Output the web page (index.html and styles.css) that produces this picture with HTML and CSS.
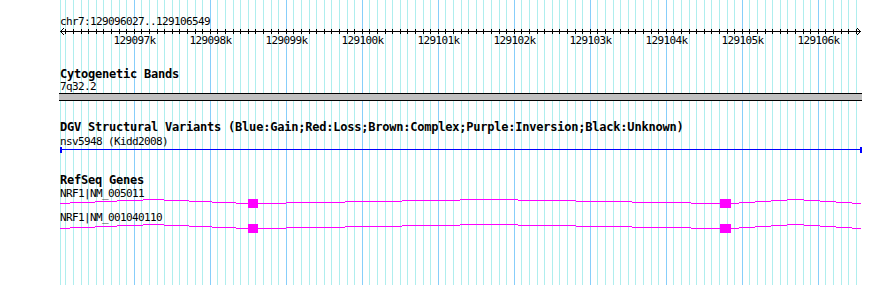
FILE: index.html
```html
<!DOCTYPE html>
<html>
<head>
<meta charset="utf-8">
<link rel="stylesheet" href="styles.css">
</head>
<body>
<div class="panel">
  <svg class="grid" width="890" height="285" viewBox="0 0 890 285" shape-rendering="crispEdges">
    <path class="grid-minor" d="M60.5 0V285M65.5 0V285M73.5 0V285M81.5 0V285M88.5 0V285M96.5 0V285M103.5 0V285M111.5 0V285M119.5 0V285M126.5 0V285
M141.5 0V285M149.5 0V285M157.5 0V285M164.5 0V285M172.5 0V285M179.5 0V285M187.5 0V285M195.5 0V285M202.5 0V285
M217.5 0V285M225.5 0V285M233.5 0V285M240.5 0V285M248.5 0V285M255.5 0V285M263.5 0V285M271.5 0V285M278.5 0V285
M293.5 0V285M301.5 0V285M309.5 0V285M316.5 0V285M324.5 0V285M331.5 0V285M339.5 0V285M347.5 0V285M354.5 0V285
M369.5 0V285M377.5 0V285M385.5 0V285M392.5 0V285M400.5 0V285M407.5 0V285M415.5 0V285M423.5 0V285M430.5 0V285
M445.5 0V285M453.5 0V285M461.5 0V285M468.5 0V285M476.5 0V285M483.5 0V285M491.5 0V285M499.5 0V285M506.5 0V285
M521.5 0V285M529.5 0V285M537.5 0V285M544.5 0V285M552.5 0V285M559.5 0V285M567.5 0V285M575.5 0V285M582.5 0V285
M597.5 0V285M605.5 0V285M613.5 0V285M620.5 0V285M628.5 0V285M635.5 0V285M643.5 0V285M651.5 0V285M658.5 0V285
M673.5 0V285M681.5 0V285M689.5 0V285M696.5 0V285M704.5 0V285M711.5 0V285M719.5 0V285M727.5 0V285M734.5 0V285
M749.5 0V285M757.5 0V285M765.5 0V285M772.5 0V285M780.5 0V285M787.5 0V285M795.5 0V285M803.5 0V285M810.5 0V285
M825.5 0V285M833.5 0V285M841.5 0V285M848.5 0V285M856.5 0V285"/>
    <path class="grid-major" d="M134.5 0V285M210.5 0V285M286.5 0V285M362.5 0V285M438.5 0V285M514.5 0V285M590.5 0V285M666.5 0V285M742.5 0V285M818.5 0V285"/>
  </svg>

  <div class="content">
    <div class="small seglabel">chr7:129096027..129106549</div>
    <svg class="ruler" width="830" height="20" viewBox="60 28 830 20">
      <g shape-rendering="crispEdges">
        <path class="ruler-line" d="M60 31.5H861"/>
        <path class="ruler-line" d="M65.5 29V34M73.5 29V34M81.5 29V34M88.5 29V34M96.5 29V34M103.5 29V34M111.5 29V34M119.5 29V34M126.5 29V34M134.5 29V34
M141.5 29V34M149.5 29V34M157.5 29V34M164.5 29V34M172.5 29V34M179.5 29V34M187.5 29V34M195.5 29V34M202.5 29V34M210.5 29V34
M217.5 29V34M225.5 29V34M233.5 29V34M240.5 29V34M248.5 29V34M255.5 29V34M263.5 29V34M271.5 29V34M278.5 29V34M286.5 29V34
M293.5 29V34M301.5 29V34M309.5 29V34M316.5 29V34M324.5 29V34M331.5 29V34M339.5 29V34M347.5 29V34M354.5 29V34M362.5 29V34
M369.5 29V34M377.5 29V34M385.5 29V34M392.5 29V34M400.5 29V34M407.5 29V34M415.5 29V34M423.5 29V34M430.5 29V34M438.5 29V34
M445.5 29V34M453.5 29V34M461.5 29V34M468.5 29V34M476.5 29V34M483.5 29V34M491.5 29V34M499.5 29V34M506.5 29V34M514.5 29V34
M521.5 29V34M529.5 29V34M537.5 29V34M544.5 29V34M552.5 29V34M559.5 29V34M567.5 29V34M575.5 29V34M582.5 29V34M590.5 29V34
M597.5 29V34M605.5 29V34M613.5 29V34M620.5 29V34M628.5 29V34M635.5 29V34M643.5 29V34M651.5 29V34M658.5 29V34M666.5 29V34
M673.5 29V34M681.5 29V34M689.5 29V34M696.5 29V34M704.5 29V34M711.5 29V34M719.5 29V34M727.5 29V34M734.5 29V34M742.5 29V34
M749.5 29V34M757.5 29V34M765.5 29V34M772.5 29V34M780.5 29V34M787.5 29V34M795.5 29V34M803.5 29V34M810.5 29V34M818.5 29V34
M825.5 29V34M833.5 29V34M841.5 29V34M848.5 29V34M856.5 29V34"/>
      </g>
      <path class="ruler-arrow" d="M64 28L60.5 31.5L64 35M857 28L860.5 31.5L857 35"/>
      <g class="ruler-labels">
        <text x="134.5" y="44">129097k</text>
        <text x="210.5" y="44">129098k</text>
        <text x="286.5" y="44">129099k</text>
        <text x="362.5" y="44">129100k</text>
        <text x="438.5" y="44">129101k</text>
        <text x="514.5" y="44">129102k</text>
        <text x="590.5" y="44">129103k</text>
        <text x="666.5" y="44">129104k</text>
        <text x="742.5" y="44">129105k</text>
        <text x="818.5" y="44">129106k</text>
      </g>
    </svg>

    <section class="track track-cyto">
      <div class="title">Cytogenetic Bands</div>
      <div class="small sub-cyto">7q32.2</div>
      <div class="band"></div>
    </section>

    <section class="track track-dgv">
      <div class="title">DGV Structural Variants (Blue:Gain;Red:Loss;Brown:Complex;Purple:Inversion;Black:Unknown)</div>
      <div class="small sub-dgv">nsv5948 (Kidd2008)</div>
      <svg class="glyph" width="802" height="6" viewBox="60 147 802 6" shape-rendering="crispEdges">
        <path class="dgv-line" d="M60 149.5H862"/>
        <rect class="dgv-cap" x="60" y="147" width="2" height="6"/>
        <rect class="dgv-cap" x="860" y="147" width="2" height="6"/>
      </svg>
    </section>

    <section class="track track-genes">
      <div class="title">RefSeq Genes</div>
      <div class="small sub-gene1">NRF1|NM_005011</div>
      <svg class="glyph" width="802" height="9" viewBox="60 199 802 9" shape-rendering="crispEdges">
        <path class="intron" d="M60 203.5H70M70 202.5H95M95 201.5H117M117 200.5H143M143 199.5H164M164 200.5H189M189 201.5H212M212 202.5H236M236 203.5H248M258 203.5H286M286 202.5H345M345 201.5H402M402 200.5H460M460 199.5H518M518 200.5H576M576 201.5H632M632 202.5H691M691 203.5H720M731 203.5H739M739 202.5H755M755 201.5H771M771 200.5H787M787 199.5H804M804 200.5H820M820 201.5H836M836 202.5H852M852 203.5H861"/>
        <rect class="exon" x="248" y="199" width="10" height="9"/>
        <rect class="exon" x="720" y="199" width="11" height="9"/>
      </svg>
      <div class="small sub-gene2">NRF1|NM_001040110</div>
      <svg class="glyph glyph-gene2" width="802" height="9" viewBox="60 224 802 9" shape-rendering="crispEdges">
        <g transform="translate(0 25)">
          <path class="intron" d="M60 203.5H70M70 202.5H95M95 201.5H117M117 200.5H143M143 199.5H164M164 200.5H189M189 201.5H212M212 202.5H236M236 203.5H248M258 203.5H286M286 202.5H345M345 201.5H402M402 200.5H460M460 199.5H518M518 200.5H576M576 201.5H632M632 202.5H691M691 203.5H720M731 203.5H739M739 202.5H755M755 201.5H771M771 200.5H787M787 199.5H804M804 200.5H820M820 201.5H836M836 202.5H852M852 203.5H861"/>
          <rect class="exon" x="248" y="199" width="10" height="9"/>
          <rect class="exon" x="720" y="199" width="11" height="9"/>
        </g>
      </svg>
    </section>
  </div>
</div>
</body>
</html>
```

FILE: styles.css
```css
html, body {
  margin: 0;
  padding: 0;
  background: #ffffff;
}

.panel {
  position: relative;
  width: 890px;
  height: 285px;
  overflow: hidden;
  background: #ffffff;
}

.grid {
  position: absolute;
  left: 0;
  top: 0;
  display: block;
}

.grid-minor {
  stroke: #afeeee;
  stroke-width: 1;
  fill: none;
}

.grid-major {
  stroke: #87cefa;
  stroke-width: 1;
  fill: none;
}

.content {
  position: relative;
  padding: 15px 0 0 60px;
}

.small {
  font-family: "DejaVu Sans Mono", "Liberation Mono", monospace;
  font-size: 11px;
  line-height: 11px;
  height: 11px;
  letter-spacing: -0.62px;
  white-space: nowrap;
  color: #000000;
}

.seglabel {
  line-height: 13px;
  height: 13px;
}

.title {
  font-family: "DejaVu Sans Mono", "Liberation Mono", monospace;
  font-weight: bold;
  font-size: 12px;
  line-height: 11px;
  height: 11px;
  letter-spacing: -0.22px;
  white-space: nowrap;
  color: #000000;
}

.ruler {
  display: block;
  overflow: visible;
}

.ruler-line {
  stroke: #000000;
  stroke-width: 1;
  fill: none;
}

.ruler-arrow {
  stroke: #000000;
  stroke-width: 1;
  fill: none;
}

.ruler-labels text {
  font-family: "DejaVu Sans Mono", "Liberation Mono", monospace;
  font-size: 11px;
  letter-spacing: -0.62px;
  text-anchor: middle;
  fill: #000000;
}

.track-cyto {
  margin-top: 21px;
}

.sub-cyto {
  margin-top: 1px;
}

.band {
  margin: 1px 0 0 -1px;
  width: 803px;
  height: 6px;
  background: #c0c0c0;
  border-top: 1px solid #000000;
  border-bottom: 1px solid #000000;
}

.track-dgv {
  margin-top: 21px;
}

.sub-dgv {
  margin-top: 3px;
}

.glyph {
  display: block;
}

.dgv-line {
  stroke: #0000ff;
  stroke-width: 1;
  fill: none;
}

.dgv-cap {
  fill: #0000ff;
}

.track-genes {
  margin-top: 22px;
}

.sub-gene1 {
  margin-top: 2px;
}

.sub-gene2 {
  margin-top: 4px;
}

.glyph-gene2 {
  margin-top: 1px;
}

.intron {
  stroke: #ff00ff;
  stroke-width: 1;
  fill: none;
}

.exon {
  fill: #ff00ff;
}
```
